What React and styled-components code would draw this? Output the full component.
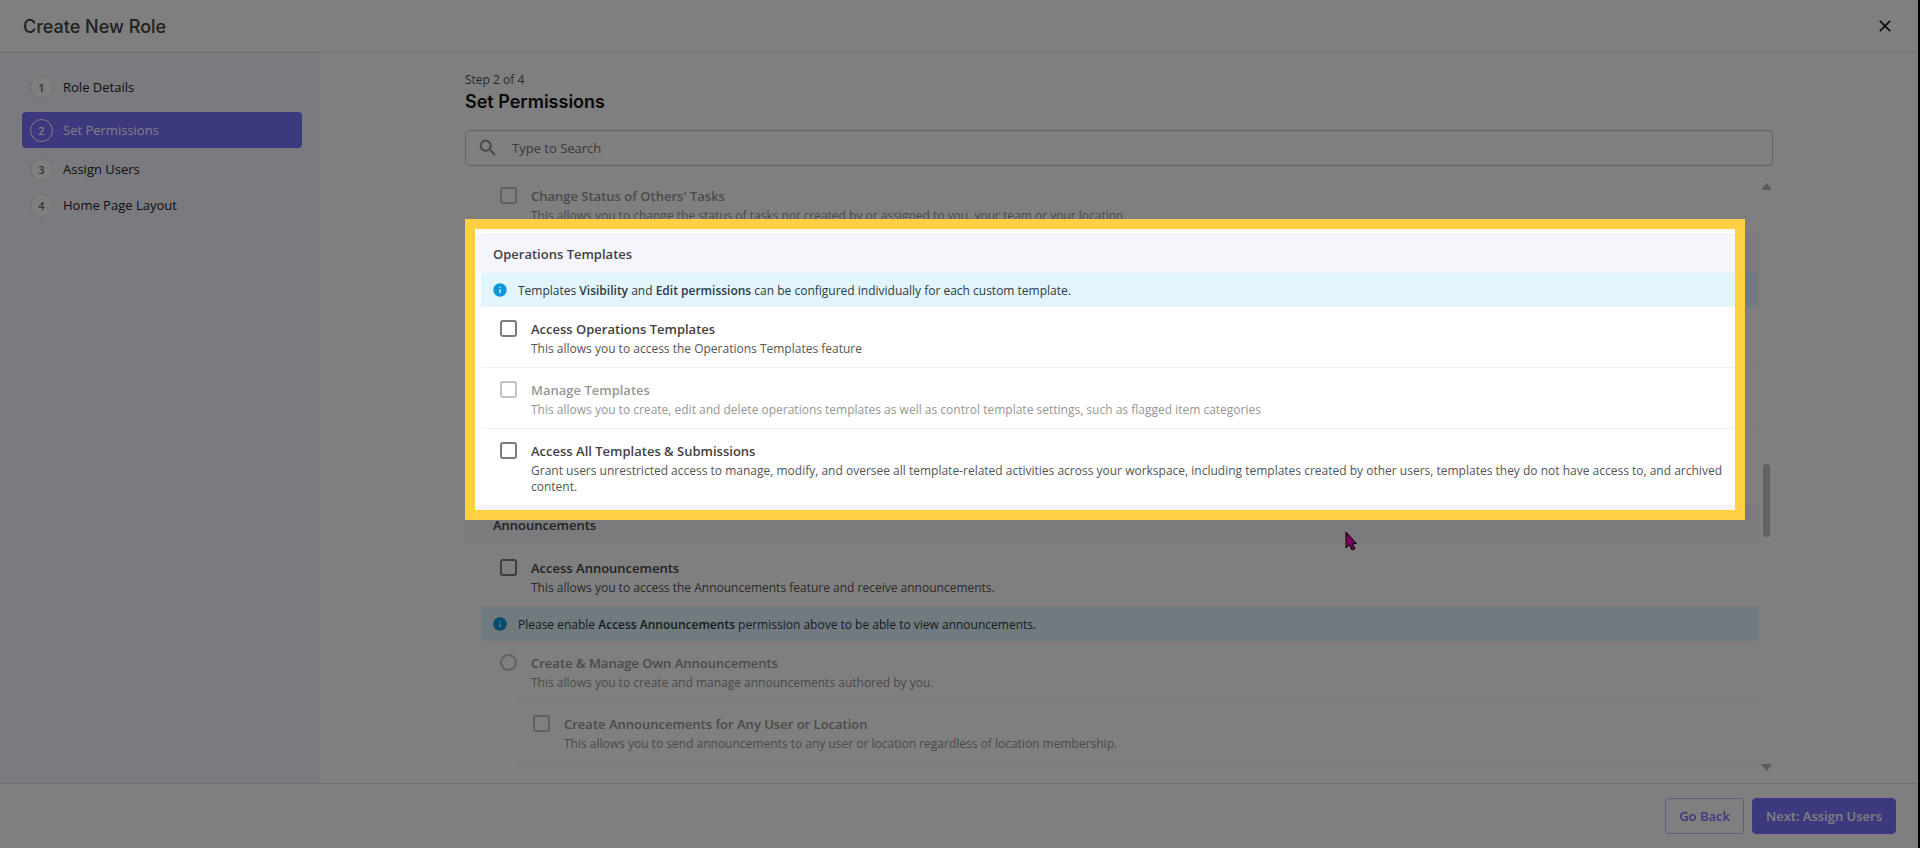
import React from "react";
import styled, { createGlobalStyle } from "styled-components";
import { MdClose, MdInfo, MdSearch } from "react-icons/md";

const colors = {
  primary: "#7872ff",
  lavender: "#f6f5fb",
  infoBg: "#e2f4fc",
  infoIcon: "#0a96dc",
  text: "#424242",
  muted: "#555555",
  disabled: "#969696",
  line: "#f1f1f2",
  spotlight: "#ffd043",
};

const steps = ["Role Details", "Set Permissions", "Assign Users", "Home Page Layout"];

function Permission({ id, type = "checkbox", title, text, disabled, ...rest }) {
  return (
    <Row $disabled={disabled} {...rest}>
      <Tick type={type} id={id} disabled={disabled} aria-describedby={`${id}-text`} />
      <RowBody>
        <RowTitle htmlFor={id}>{title}</RowTitle>
        <RowText id={`${id}-text`} $disabled={disabled}>
          {text}
        </RowText>
      </RowBody>
    </Row>
  );
}

function App() {
  return (
    <>
      <GlobalStyle />
      <Page>
        <Header>
          <h1>Create New Role</h1>
          <CloseButton type="button" aria-label="Close">
            <MdClose />
          </CloseButton>
        </Header>
        <Body>
          <Sidebar>
            <ol>
              {steps.map((step, i) => (
                <Step key={step} $active={i === 1}>
                  <a href={`#step-${i + 1}`} aria-current={i === 1 ? "step" : undefined}>
                    <span className="number">{i + 1}</span>
                    {step}
                  </a>
                </Step>
              ))}
            </ol>
          </Sidebar>
          <Main>
            <Content>
              <StepCount>Step 2 of 4</StepCount>
              <h2>Set Permissions</h2>
              <SearchBox>
                <MdSearch />
                <input type="text" placeholder="Type to Search" aria-label="Type to Search" />
              </SearchBox>
              <ListArea>
                <List>
                  <Section>
                    <Permission
                      id="change-status"
                      title="Change Status of Others' Tasks"
                      text="This allows you to change the status of tasks not created by or assigned to you, your team or your location."
                      disabled
                    />
                  </Section>
                  <Section>
                    <SectionTitle>Operations Templates</SectionTitle>
                    <Info>
                      <MdInfo />
                      <p>
                        Templates <b>Visibility</b> and <b>Edit permissions</b> can be configured
                        individually for each custom template.
                      </p>
                    </Info>
                    <Permission
                      id="access-templates"
                      title="Access Operations Templates"
                      text="This allows you to access the Operations Templates feature"
                    />
                    <Permission
                      id="manage-templates"
                      title="Manage Templates"
                      text="This allows you to create, edit and delete operations templates as well as control template settings, such as flagged item categories"
                      disabled
                    />
                    <Permission
                      id="access-all"
                      title="Access All Templates & Submissions"
                      text="Grant users unrestricted access to manage, modify, and oversee all template-related activities across your workspace, including templates created by other users, templates they do not have access to, and archived content."
                    />
                    <Spotlight />
                  </Section>
                  <Section>
                    <SectionTitle>Announcements</SectionTitle>
                    <Permission
                      id="access-announcements"
                      title="Access Announcements"
                      text="This allows you to access the Announcements feature and receive announcements."
                      $first
                    />
                    <Info>
                      <MdInfo />
                      <p>
                        Please enable <b>Access Announcements</b> permission above to be able to
                        view announcements.
                      </p>
                    </Info>
                    <Permission
                      id="own-announcements"
                      type="radio"
                      title="Create & Manage Own Announcements"
                      text="This allows you to create and manage announcements authored by you."
                      disabled
                      $parent
                    />
                    <Nested>
                      <Permission
                        id="any-user"
                        title="Create Announcements for Any User or Location"
                        text="This allows you to send announcements to any user or location regardless of location membership."
                        disabled
                      />
                    </Nested>
                    <Pointer viewBox="0 0 12 20" aria-hidden="true">
                      <path d="M1 1v16l3.500-3.200 2.600 5.200 2.800-1.300-2.500-5.100H11.500z" />
                    </Pointer>
                  </Section>
                </List>
                <Scrollbar aria-hidden="true">
                  <svg viewBox="0 0 9 7">
                    <path d="M4.500 0 L9 5.500 V7 H0 V5.500z" />
                  </svg>
                  <span className="thumb" />
                  <svg viewBox="0 0 9 7">
                    <path d="M4.500 7 L0 1.500 V0 H9 V1.500z" />
                  </svg>
                </Scrollbar>
              </ListArea>
            </Content>
          </Main>
        </Body>
        <Footer>
          <Button type="button">Go Back</Button>
          <Button type="button" $primary>
            Next: Assign Users
          </Button>
        </Footer>
      </Page>
    </>
  );
}

const GlobalStyle = createGlobalStyle`
  * {
    box-sizing: border-box;
    margin: 0;
    padding: 0;
  }
  body {
    font-family: "Open Sans", "Liberation Sans", sans-serif;
    color: ${colors.text};
    background-color: white;
  }
  h1,
  h2 {
    font-family: Inter, "Liberation Sans", sans-serif;
  }
  button,
  input {
    font-family: inherit;
  }
`;

const Page = styled.div`
  min-height: 100vh;
  display: flex;
  flex-direction: column;
  overflow: hidden;
  border-right: 2px solid black;
`;

const Header = styled.header`
  display: flex;
  align-items: center;
  justify-content: space-between;
  height: 53px;
  padding: 0 23px;
  border-bottom: 1px solid #e6e6e6;
  h1 {
    font-size: 18px;
    font-weight: 500;
  }
`;

const CloseButton = styled.button`
  display: flex;
  border: none;
  background: none;
  color: #111;
  cursor: pointer;
  svg {
    width: 20px;
    height: 20px;
  }
`;

const Body = styled.div`
  display: flex;
  flex: 1;
`;

const Sidebar = styled.nav`
  width: 320px;
  flex-shrink: 0;
  padding: 16px 18px 16px 22px;
  background-color: #f7f5ff;
  ol {
    list-style-type: none;
  }
`;

const Step = styled.li`
  margin: ${(props) => (props.$active ? "7px 0 3px" : "0")};
  a {
    display: flex;
    align-items: center;
    gap: 10px;
    height: 36px;
    padding: 0 8px;
    border-radius: 4px;
    font-size: 13px;
    font-weight: 500;
    text-decoration: none;
    color: ${(props) => (props.$active ? "white" : "#1c1c1c")};
    background-color: ${(props) => (props.$active ? colors.primary : "transparent")};
  }
  .number {
    display: flex;
    align-items: center;
    justify-content: center;
    width: 23px;
    height: 23px;
    border: 1px solid ${(props) => (props.$active ? "white" : "#e2e1e8")};
    border-radius: 100%;
    font-size: 11px;
    font-weight: 600;
    color: ${(props) => (props.$active ? "white" : "#666")};
    background-color: ${(props) => (props.$active ? "transparent" : "white")};
  }
`;

const Main = styled.main`
  flex: 1;
  min-width: 0;
  display: flex;
  justify-content: center;
  padding-top: 18px;
`;

const Content = styled.div`
  display: flex;
  flex-direction: column;
  width: 100%;
  max-width: 1308px;
  h2 {
    font-size: 18px;
    line-height: 26px;
    font-weight: 600;
    color: #111;
  }
`;

const StepCount = styled.p`
  font-size: 12px;
  line-height: 18px;
  color: ${colors.muted};
`;

const SearchBox = styled.div`
  display: flex;
  align-items: center;
  gap: 13px;
  height: 36px;
  margin: 15px 0 8px;
  padding: 0 11px;
  border: 1px solid #c6c6c6;
  border-radius: 4px;
  svg {
    width: 22px;
    height: 22px;
    color: #868686;
  }
  input {
    flex: 1;
    border: none;
    outline: none;
    background: none;
    font-size: 13px;
    &::placeholder {
      color: #757575;
      opacity: 1;
    }
  }
`;

const ListArea = styled.div`
  display: flex;
  flex: 1;
`;

const List = styled.div`
  flex: 1;
  min-width: 0;
`;

const Section = styled.section`
  position: relative;
`;

const SectionTitle = styled.h3`
  height: 38px;
  padding-left: 28px;
  line-height: 38px;
  font-size: 13px;
  font-weight: 600;
  background-color: ${colors.lavender};
`;

const Info = styled.div`
  display: flex;
  align-items: center;
  gap: 10px;
  height: 34px;
  margin-left: 16px;
  padding-left: 11px;
  font-size: 12px;
  font-weight: 500;
  color: #2c3a42;
  background-color: ${colors.infoBg};
  svg {
    width: 16px;
    height: 16px;
    color: ${colors.infoIcon};
  }
  b {
    font-weight: 600;
  }
`;

const Row = styled.div`
  display: flex;
  align-items: flex-start;
  gap: 14px;
  margin-left: 16px;
  padding: ${(props) => (props.$first ? "14px" : "12px")} 32px 10px 19px;
  border-bottom: ${(props) => (props.$parent ? "none" : `1px solid ${colors.line}`)};
  color: ${(props) => (props.$disabled ? colors.disabled : colors.text)};
`;

const Tick = styled.input`
  appearance: none;
  flex-shrink: 0;
  width: 17px;
  height: 17px;
  margin-top: 1px;
  border: 2px solid #7c7c7c;
  border-radius: ${(props) => (props.type === "radio" ? "100%" : "3px")};
  &:disabled {
    border-color: #c2c2c2;
  }
`;

const RowBody = styled.div`
  display: flex;
  flex-direction: column;
  gap: 2px;
`;

const RowTitle = styled.label`
  font-size: 13px;
  line-height: 20px;
  font-weight: 600;
`;

const RowText = styled.p`
  font-size: 12px;
  line-height: 16px;
  color: ${(props) => (props.$disabled ? colors.disabled : colors.muted)};
`;

const Nested = styled.div`
  margin-left: 51px;
  border-top: 1px solid ${colors.line};
  ${Row} {
    margin-left: 0;
    padding-left: 17px;
  }
`;

const Spotlight = styled.div`
  position: absolute;
  z-index: 10;
  top: -16px;
  right: 14px;
  bottom: -14px;
  left: 0;
  border: 10px solid ${colors.spotlight};
  box-shadow: 0 0 0 9999px rgba(0, 0, 0, 0.5);
  pointer-events: none;
`;

const Pointer = styled.svg`
  position: absolute;
  top: 25px;
  left: 68%;
  width: 12px;
  height: 20px;
  fill: #ff00b8;
  stroke: black;
`;

const Scrollbar = styled.div`
  display: grid;
  grid-template-rows: 7px 273fr 73px 227fr 7px;
  justify-items: center;
  width: 14px;
  padding: 9px 0 12px;
  svg {
    width: 9px;
    height: 7px;
    fill: #b8b8b8;
  }
  .thumb {
    grid-row: 3;
    width: 7px;
    border-radius: 4px;
    background-color: #c4c4c4;
  }
  svg:last-child {
    grid-row: 5;
  }
`;

const Footer = styled.footer`
  display: flex;
  justify-content: flex-end;
  gap: 8px;
  padding: 14px 22px;
  border-top: 1px solid #dcdcdc;
`;

const Button = styled.button`
  height: 36px;
  padding: 0 13px;
  border: 1px solid ${(props) => (props.$primary ? colors.primary : "#c0bdff")};
  border-radius: 4px;
  font-size: 13px;
  font-weight: 600;
  color: ${(props) => (props.$primary ? "white" : colors.primary)};
  background-color: ${(props) => (props.$primary ? colors.primary : "white")};
  cursor: pointer;
`;

export default App;
